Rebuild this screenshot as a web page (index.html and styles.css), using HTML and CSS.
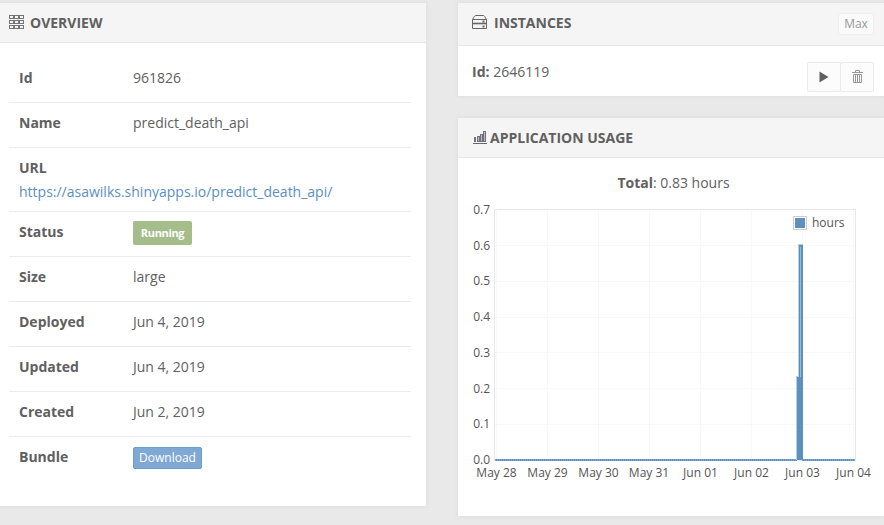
FILE: index.html
```
<!DOCTYPE html>
<html lang="en">
<head>
<meta charset="utf-8">
<title>Application overview</title>
<link rel="stylesheet" href="styles.css">
</head>
<body>
<main class="dashboard">
  <section class="panel overview">
    <header class="panel-head">
      <svg class="icon" width="15" height="15" viewBox="0 0 15 15" fill="none" stroke="#747474" shape-rendering="crispEdges">
        <path d="M.5.5h4v3h-4zM5.5.5h4v3h-4zM10.500.5h4v3h-4zM.5 5.500h4v3h-4zM5.500 5.500h4v3h-4zM10.500 5.500h4v3h-4zM.5 10.500h4v3h-4zM5.500 10.500h4v3h-4zM10.500 10.500h4v3h-4z"/>
      </svg>
      <h2>OVERVIEW</h2>
    </header>
    <dl class="details">
      <div class="row"><dt>Id</dt><dd>961826</dd></div>
      <div class="row"><dt>Name</dt><dd>predict_death_api</dd></div>
      <div class="row url"><dt>URL</dt><dd><a>https://asawilks.shinyapps.io/predict_death_api/</a></dd></div>
      <div class="row"><dt>Status</dt><dd><span class="status">Running</span></dd></div>
      <div class="row"><dt>Size</dt><dd>large</dd></div>
      <div class="row"><dt>Deployed</dt><dd>Jun 4, 2019</dd></div>
      <div class="row"><dt>Updated</dt><dd>Jun 4, 2019</dd></div>
      <div class="row"><dt>Created</dt><dd>Jun 2, 2019</dd></div>
      <div class="row"><dt>Bundle</dt><dd><button class="download">Download</button></dd></div>
    </dl>
  </section>
  <div class="side">
    <section class="panel instances">
      <header class="panel-head">
        <svg class="icon" width="15" height="15" viewBox="0 0 15 15" fill="none" stroke="#666">
          <path d="M.5 13.500V4.500L2.500 1.200Q2.900.5 3.700.5h7.600q.8 0 1.200.7l2 3.300v9zM.5 4.500h14"/>
          <path d="M1 8.500h13" stroke-width="1.600"/>
          <path d="M10.500 5.500h2v2h-2zM10.500 10.500h2v2h-2z" fill="#666" stroke="none"/>
        </svg>
        <h2>INSTANCES</h2>
        <button class="max">Max</button>
      </header>
      <div class="instance">
        <p><b>Id:</b> 2646119</p>
        <div class="actions">
          <button aria-label="Start"><svg width="10" height="12" viewBox="0 0 10 12"><path d="M.5.5 9.500 6 .5 11.500z" fill="#606060"/></svg></button>
          <button aria-label="Delete"><svg class="trash" width="11" height="14" viewBox="0 0 11 14" fill="none" stroke="#999"><path d="M0 2.500h11M3.500 2V.5h4V2M1.500 4.500h8v8h-8zM3.500 5v7M5.500 5v7M7.500 5v7"/></svg></button>
        </div>
      </div>
    </section>
    <section class="panel usage">
      <header class="panel-head">
        <svg class="icon" width="14" height="13" viewBox="0 0 14 13" fill="#b9b9c4" stroke="#70707e" shape-rendering="crispEdges">
          <path d="M0 12.500h14" stroke="#666"/><path d="M1.500 10.500v-4h1v4zM4.500 10.500v-5h2v5zM7.500 10.500v-7h2v7zM10.500 10.500V.5h2v10z"/>
        </svg>
        <h2>APPLICATION USAGE</h2>
      </header>
      <p class="total"><b>Total</b>: 0.83 hours</p>
      <svg class="chart" width="426" height="290" viewBox="458 200 426 290">
        <g class="grid">
          <path d="M496.500 210V459M547.500 210V459M598.500 210V459M649.500 210V459M700.500 210V459M751.500 210V459M802.500 210V459M853.500 210V459"/>
          <path d="M495 245.500H855M495 281.500H855M495 317.500H855M495 352.500H855M495 388.500H855M495 424.500H855"/>
        </g>
        <rect class="frame" x="494.500" y="209.500" width="361" height="251"/>
        <path class="series-base" d="M495 460H797M802 460H855"/>
        <path class="series-ticks" d="M495 460H797M802 460H855"/>
        <rect class="edge" x="796" y="376" width="3" height="84"/>
        <rect class="edge" x="798" y="244" width="5" height="133"/>
        <rect class="bar" x="799" y="245" width="4" height="215"/>
        <rect class="bar" x="797" y="377" width="3" height="83"/>
        <path class="core" d="M800.500 247V377"/>
        <rect class="swatch-frame" x="793.500" y="216.500" width="13" height="13"/>
        <rect class="bar" x="795" y="218" width="10" height="10"/>
        <text x="812" y="227">hours</text>
        <g text-anchor="end">
          <text x="490" y="214">0.7</text><text x="490" y="250">0.6</text><text x="490" y="285">0.5</text><text x="490" y="321">0.4</text><text x="490" y="357">0.3</text><text x="490" y="393">0.2</text><text x="490" y="428">0.1</text><text x="490" y="464">0.0</text>
        </g>
        <g text-anchor="middle">
          <text x="496.500" y="477">May 28</text><text x="547.500" y="477">May 29</text><text x="598.500" y="477">May 30</text><text x="649" y="477">May 31</text><text x="700.500" y="477">Jun 01</text><text x="751.500" y="477">Jun 02</text><text x="802.500" y="477">Jun 03</text><text x="853.500" y="477">Jun 04</text>
        </g>
      </svg>
    </section>
  </div>
</main>
</body>
</html>
```
FILE: styles.css
```
* { box-sizing: border-box; }
body { margin: 0; height: 525px; overflow: hidden; background: #e9e9e9; color: #606060; font: 14px/20px "Open Sans", sans-serif; }
h2, p, dl, dd { margin: 0; }
button { font-family: inherit; padding: 0; border-radius: 2px; }
.dashboard { display: grid; grid-template-columns: 426px 426px; column-gap: 32px; align-items: start; padding-top: 3px; }
.panel { background: #fff; box-shadow: 0 0 3px 1px #dfdfdf; }
.panel-head { display: flex; align-items: center; height: 40px; background: #f5f5f5; border-bottom: 1px solid #e7e7e7; }
.panel-head h2 { font-size: 14px; line-height: 20px; font-weight: 700; }
.icon { flex: none; display: block; }
.overview { height: 503px; }
.overview .panel-head { padding-left: 9px; gap: 6px; }
.details { margin: 15px 15px 0 9px; }
.row { display: flex; height: 45px; padding: 10px 10px 0; border-bottom: 1px solid #ebebeb; }
.row:last-child { border-bottom: 0; }
.row dt { width: 114px; font-weight: 700; }
.row.url { display: block; height: 64px; }
.row.url dd { margin-top: 4px; }
.row a { color: #5b90bf; }
.status { display: block; width: 59px; height: 24px; margin-top: -1px; border-radius: 2px; background: #a4bd8b; color: #fff; font-size: 11px; font-weight: 700; letter-spacing: -.35px; line-height: 24px; text-align: center; }
.download { display: block; width: 69px; height: 22px; border: 1px solid #699dcb; background: #7fa9d3; color: #fff; font-size: 12px; line-height: 20px; }
.instances { height: 93px; }
.instances .panel-head { height: 43px; padding: 0 10px 3px 14px; gap: 7px; }
.max { width: 36px; height: 22px; margin: 2px 0 0 auto; border: 1px solid #eee; background: #fafafa; color: #999; font-size: 12px; line-height: 20px; }
.instance { display: flex; justify-content: space-between; padding: 16px 10px 0 14px; }
.actions { display: flex; }
.actions button { width: 34px; height: 30px; display: flex; align-items: center; justify-content: center; border: 1px solid #ebebeb; background: #fcfcfc; }
.actions button + button { margin-left: -1px; }
.trash { margin-top: -1px; }
.usage { height: 398px; margin-top: 22px; }
.usage .panel-head { padding-left: 15px; gap: 3px; }
.total { margin-top: 15px; padding-left: 5px; text-align: center; }
.chart { display: block; margin-top: 7px; font-size: 12px; }
.chart text { fill: #555; }
.grid { stroke: #f8f8f8; }
.frame { fill: none; stroke: #e8e8e8; }
.series-base { fill: none; stroke: #5b90bf; stroke-width: 2; }
.series-ticks { fill: none; stroke: #7ba6cd; stroke-width: 2; stroke-dasharray: 1 1; }
.bar { fill: #5b90bf; }
.edge { fill: #b7cfe3; }
.core { stroke: #98bad8; }
.swatch-frame { fill: #fff; stroke: #ccc; }
```
